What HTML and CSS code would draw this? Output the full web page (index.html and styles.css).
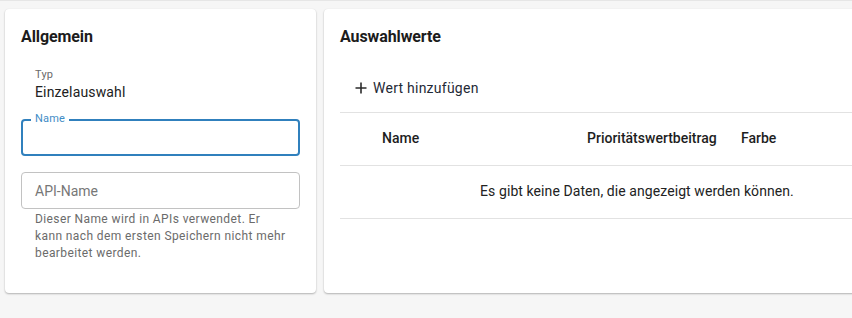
FILE: index.html
```html
<!DOCTYPE html>
<html lang="de">
<head>
<meta charset="utf-8">
<title>Auswahlfeld</title>
<link rel="stylesheet" href="styles.css">
</head>
<body>
<div class="page">
  <section class="card card-general">
    <h2 class="card-title">Allgemein</h2>
    <div class="readonly">
      <div class="readonly-label">Typ</div>
      <div class="readonly-value">Einzelauswahl</div>
    </div>
    <div class="field field-focused">
      <span class="field-label">Name</span>
    </div>
    <div class="field">
      <span class="field-placeholder">API-Name</span>
    </div>
    <p class="field-hint">Dieser Name wird in APIs verwendet. Er<br>kann nach dem ersten Speichern nicht mehr bearbeitet werden.</p>
  </section>
  <section class="card card-values">
    <h2 class="card-title">Auswahlwerte</h2>
    <div class="toolbar">
      <button class="add-btn" type="button">
        <svg class="add-icon" width="12" height="12" viewBox="0 0 12 12"><path d="M6 0.5v11M0.5 6h11" stroke="#2b2b2b" stroke-width="1.6" fill="none"/></svg>
        <span>Wert hinzufügen</span>
      </button>
    </div>
    <div class="table">
      <div class="row head">
        <div class="cell"></div>
        <div class="cell">Name</div>
        <div class="cell">Prioritätswertbeitrag</div>
        <div class="cell">Farbe</div>
      </div>
      <div class="row empty">Es gibt keine Daten, die angezeigt werden können.</div>
    </div>
  </section>
</div>
</body>
</html>
```

FILE: styles.css
```css
html, body {
  margin: 0;
  padding: 0;
}
body {
  background: #f6f6f6;
  border-top: 1px solid #e6e6e6;
  font-family: Roboto, "Liberation Sans", Arial, sans-serif;
  color: #212121;
  overflow: hidden;
  height: 317px;
}
.page {
  display: flex;
  align-items: stretch;
  gap: 8px;
  padding: 8px 0 0 5px;
  width: 1000px;
}
.card {
  flex: none;
  box-sizing: border-box;
  height: 284px;
  background: #fff;
  border-radius: 4px;
  box-shadow: 0 1px 2px rgba(0, 0, 0, 0.28), 0 0 1px rgba(0, 0, 0, 0.06);
  padding: 16px;
}
.card-general {
  width: 311px;
}
.card-values {
  width: 626px;
}
.card-title {
  margin: 0;
  font-size: 16px;
  line-height: 24px;
  font-weight: 700;
  letter-spacing: -0.1px;
  color: #1c1c1c;
}
.readonly {
  margin-top: 18px;
  padding: 0 14px;
}
.readonly-label {
  font-size: 11px;
  line-height: 15px;
  letter-spacing: 0.2px;
  color: #6a6a6a;
}
.readonly-value {
  font-size: 14px;
  line-height: 20px;
  letter-spacing: 0.15px;
  color: #212121;
}
.field {
  position: relative;
  box-sizing: border-box;
  height: 37px;
  margin-top: 16px;
  border: 1px solid #c2c2c2;
  border-radius: 4px;
  padding: 0 13px;
  display: flex;
  align-items: center;
}
.field-focused {
  margin-top: 17px;
  border: 2px solid #3080bd;
  padding: 0 12px;
}
.field-label {
  position: absolute;
  left: 8px;
  top: -9px;
  padding: 0 4px;
  background: #fff;
  font-size: 11px;
  line-height: 14px;
  letter-spacing: 0.2px;
  color: #3f8cc6;
}
.field-placeholder {
  font-size: 14px;
  color: #777;
}
.field-hint {
  margin: 2px 0 0;
  padding: 0 0 0 14px;
  font-size: 12px;
  line-height: 17px;
  letter-spacing: 0.4px;
  color: #6b6b6b;
}
.toolbar {
  margin-top: 21px;
  height: 36px;
  display: flex;
  align-items: center;
}
.add-btn {
  display: flex;
  align-items: center;
  gap: 6px;
  height: 36px;
  padding: 0 15px;
  border: 0;
  background: none;
  font-family: inherit;
  font-size: 14px;
  letter-spacing: 0.25px;
  color: #1f2a36;
  cursor: pointer;
}
.table {
  margin-top: 6px;
  border-top: 1px solid #e2e2e2;
  width: 594px;
}
.row {
  box-sizing: border-box;
  height: 53px;
  border-bottom: 1px solid #e2e2e2;
  padding-bottom: 3px;
}
.head {
  display: grid;
  grid-template-columns: 42px 205px 154px 1fr;
  align-items: center;
  font-size: 14px;
  font-weight: 500;
  color: #1e1e1e;
}
.empty {
  display: flex;
  align-items: center;
  justify-content: center;
  font-size: 14px;
  letter-spacing: 0.08px;
  color: #222;
}
```
